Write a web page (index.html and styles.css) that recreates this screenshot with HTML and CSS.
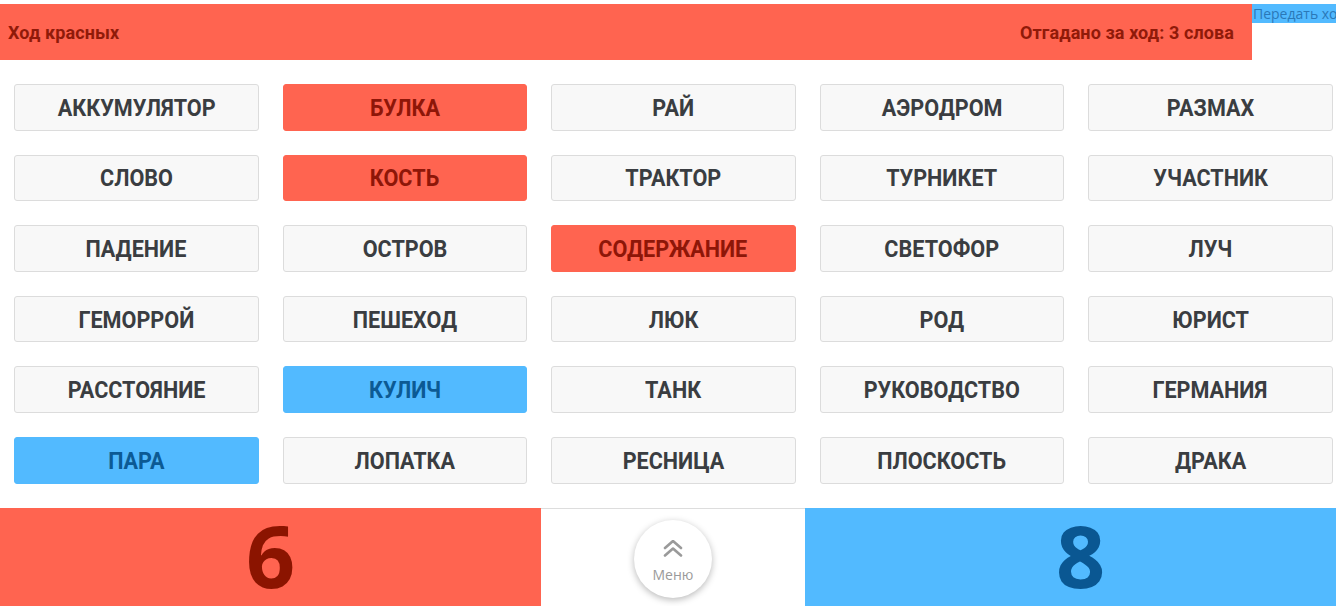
FILE: index.html
```html
<!DOCTYPE html>
<html lang="ru">
<head>
<meta charset="utf-8">
<title>Игра</title>
<link rel="stylesheet" href="styles.css">
</head>
<body>
<header class="top">
  <div class="turn-bar">
    <span class="turn-title">Ход красных</span>
    <span class="turn-count">Отгадано за ход: 3 слова</span>
  </div>
  <button class="pass-btn">Передать ход</button>
</header>

<main class="board">
  <div class="card"><span>АККУМУЛЯТОР</span></div>
  <div class="card red"><span>БУЛКА</span></div>
  <div class="card"><span>РАЙ</span></div>
  <div class="card"><span>АЭРОДРОМ</span></div>
  <div class="card"><span>РАЗМАХ</span></div>

  <div class="card"><span>СЛОВО</span></div>
  <div class="card red"><span>КОСТЬ</span></div>
  <div class="card"><span>ТРАКТОР</span></div>
  <div class="card"><span>ТУРНИКЕТ</span></div>
  <div class="card"><span>УЧАСТНИК</span></div>

  <div class="card"><span>ПАДЕНИЕ</span></div>
  <div class="card"><span>ОСТРОВ</span></div>
  <div class="card red"><span>СОДЕРЖАНИЕ</span></div>
  <div class="card"><span>СВЕТОФОР</span></div>
  <div class="card"><span>ЛУЧ</span></div>

  <div class="card"><span>ГЕМОРРОЙ</span></div>
  <div class="card"><span>ПЕШЕХОД</span></div>
  <div class="card"><span>ЛЮК</span></div>
  <div class="card"><span>РОД</span></div>
  <div class="card"><span>ЮРИСТ</span></div>

  <div class="card"><span>РАССТОЯНИЕ</span></div>
  <div class="card blue"><span>КУЛИЧ</span></div>
  <div class="card"><span>ТАНК</span></div>
  <div class="card"><span>РУКОВОДСТВО</span></div>
  <div class="card"><span>ГЕРМАНИЯ</span></div>

  <div class="card blue"><span>ПАРА</span></div>
  <div class="card"><span>ЛОПАТКА</span></div>
  <div class="card"><span>РЕСНИЦА</span></div>
  <div class="card"><span>ПЛОСКОСТЬ</span></div>
  <div class="card"><span>ДРАКА</span></div>
</main>

<footer class="scores">
  <div class="score score-red">6</div>
  <div class="menu-cell">
    <button class="menu-btn">
      <svg class="menu-icon" width="20" height="17" viewBox="0 0 20 17" aria-hidden="true">
        <polyline points="2,8 10,1 18,8" fill="none" stroke="#9a9a9a" stroke-width="2.6" stroke-linecap="round" stroke-linejoin="round"/>
        <polyline points="2,15.5 10,8.5 18,15.5" fill="none" stroke="#9a9a9a" stroke-width="2.6" stroke-linecap="round" stroke-linejoin="round"/>
      </svg>
      <span class="menu-label">Меню</span>
    </button>
  </div>
  <div class="score score-blue">8</div>
</footer>
</body>
</html>
```

FILE: styles.css
```css
html, body {
  margin: 0;
  padding: 0;
  overflow: hidden;
  background: #ffffff;
}

body {
  width: 1356px;
  height: 606px;
  font-family: "Roboto", "Liberation Sans", sans-serif;
}

.top {
  display: flex;
  align-items: flex-start;
  padding-top: 4px;
  overflow: hidden;
}

.turn-bar {
  flex: 0 0 1252px;
  height: 56px;
  box-sizing: border-box;
  background: #ff6450;
  display: flex;
  align-items: center;
  justify-content: space-between;
  padding: 0 18px 0 8px;
  color: #901a09;
  font-weight: 700;
  font-size: 18px;
  letter-spacing: 0.1px;
}

.pass-btn {
  flex: 0 0 auto;
  white-space: nowrap;
  border: none;
  margin: 0;
  padding: 0 1px;
  height: 19px;
  background: #52baff;
  color: #2a78b8;
  font-family: "Open Sans", "Liberation Sans", sans-serif;
  font-size: 14px;
  line-height: 19px;
}

.board {
  display: grid;
  grid-template-columns: repeat(5, 244.5px);
  grid-auto-rows: 46.6px;
  column-gap: 24px;
  row-gap: 24px;
  padding: 24px 0 0 14px;
  height: 424px;
  box-sizing: border-box;
}

.card {
  box-sizing: border-box;
  border: 1px solid #dcdcdc;
  border-radius: 3px;
  background: #f8f8f8;
  display: flex;
  align-items: center;
  justify-content: center;
  color: #3a3d41;
  font-weight: 700;
  font-size: 24px;
  padding-top: 1px;
}

.card span {
  display: inline-block;
  transform: scaleX(0.9);
  white-space: nowrap;
}

.card.red {
  background: #ff6450;
  border-color: #ff6450;
  color: #8e1608;
}

.card.blue {
  background: #52baff;
  border-color: #52baff;
  color: #0c5a94;
}

.scores {
  display: grid;
  grid-template-columns: 541px 264px 551px;
  height: 98px;
  margin-top: 24px;
}

.score {
  display: flex;
  align-items: center;
  justify-content: center;
  font-family: "Open Sans", "Noto Sans", sans-serif;
  font-weight: 700;
  font-size: 86px;
  line-height: 1;
  padding-bottom: 4px;
  box-sizing: border-box;
}

.score-red {
  background: #ff6450;
  color: #8b1400;
}

.score-blue {
  background: #52baff;
  color: #0a5792;
}

.menu-cell {
  border-top: 1px solid #dddddd;
  display: flex;
  justify-content: center;
  align-items: flex-start;
}

.menu-btn {
  margin-top: 11px;
  width: 78px;
  height: 78px;
  border-radius: 50%;
  border: none;
  background: #ffffff;
  box-shadow: 0 2px 7px rgba(0, 0, 0, 0.28);
  display: flex;
  flex-direction: column;
  align-items: center;
  padding: 20px 0 0 0;
  box-sizing: border-box;
}

.menu-icon {
  display: block;
}

.menu-label {
  margin-top: 9px;
  font-family: "Open Sans", "Liberation Sans", sans-serif;
  font-size: 14px;
  color: #9a9a9a;
  line-height: 18px;
}
```
